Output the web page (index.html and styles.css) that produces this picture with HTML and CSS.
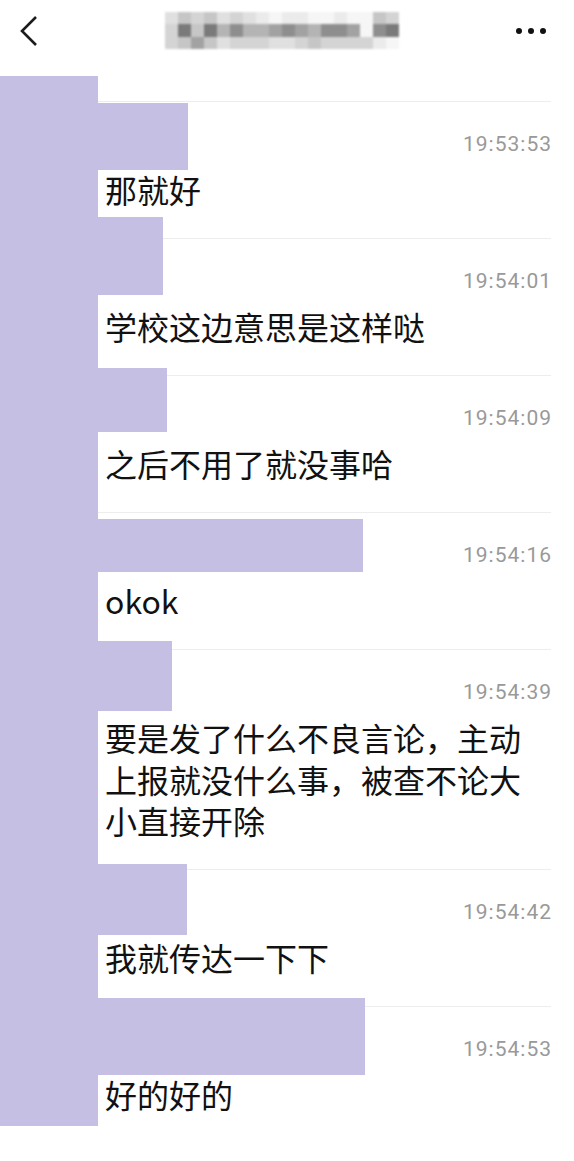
FILE: index.html
```html
<!DOCTYPE html>
<html lang="zh-CN">
<head>
<meta charset="utf-8">
<title>聊天记录</title>
<link rel="stylesheet" href="styles.css">
</head>
<body>
<header class="topbar">
  <div class="back">
    <svg width="24" height="34" viewBox="0 0 24 34"><polyline points="20,3 6,17 20,31" fill="none" stroke="#1c1c1c" stroke-width="2.6" stroke-linejoin="miter"/></svg>
  </div>
  <div class="mosaic">
    <i class="g2"></i><i class="g4"></i><i class="g3"></i><i class="g4"></i><i class="g2"></i><i class="g3"></i><i class="g2"></i><i class="g1"></i><i class="g0"></i><i class="g1"></i><i class="g1"></i><i class="g0"></i><i class="g0"></i><i class="g1"></i><i class="g0"></i><i class="g0"></i><i class="g4"></i><i class="g3"></i>
    <i class="g3"></i><i class="g8"></i><i class="g4"></i><i class="g8"></i><i class="g5"></i><i class="g7"></i><i class="g5"></i><i class="g5"></i><i class="g6"></i><i class="g7"></i><i class="g6"></i><i class="g5"></i><i class="g7"></i><i class="g7"></i><i class="g6"></i><i class="g0"></i><i class="g7"></i><i class="g8"></i>
    <i class="g3"></i><i class="g4"></i><i class="g6"></i><i class="g4"></i><i class="g2"></i><i class="g3"></i><i class="g3"></i><i class="g3"></i><i class="g2"></i><i class="g2"></i><i class="g3"></i><i class="g4"></i><i class="g3"></i><i class="g3"></i><i class="g3"></i><i class="g3"></i><i class="g1"></i><i class="g0"></i>
  </div>
  <div class="more"><span></span><span></span><span></span></div>
</header>

<main class="chat">
  <div class="row row-top"></div>
  <div class="row"><div class="time">19:53:53</div><div class="msg">那就好</div></div>
  <div class="row"><div class="time">19:54:01</div><div class="msg">学校这边意思是这样哒</div></div>
  <div class="row"><div class="time">19:54:09</div><div class="msg">之后不用了就没事哈</div></div>
  <div class="row"><div class="time">19:54:16</div><div class="msg">okok</div></div>
  <div class="row"><div class="time">19:54:39</div><div class="msg">要是发了什么不良言论，主动上报就没什么事，被查不论大小直接开除</div></div>
  <div class="row"><div class="time">19:54:42</div><div class="msg">我就传达一下下</div></div>
  <div class="row"><div class="time">19:54:53</div><div class="msg">好的好的</div></div>

  <div class="mask mask-col"></div>
  <div class="mask m1"></div>
  <div class="mask m2"></div>
  <div class="mask m3"></div>
  <div class="mask m4"></div>
  <div class="mask m5"></div>
  <div class="mask m6"></div>
  <div class="mask m7"></div>
</main>
</body>
</html>
```

FILE: styles.css
```css
html, body {
  margin: 0;
  padding: 0;
  background: #ffffff;
}

body {
  width: 574px;
  min-height: 1161px;
  font-family: "Noto Sans CJK SC", "Noto Sans", sans-serif;
  color: #111111;
}

.topbar {
  height: 76px;
  display: flex;
  align-items: flex-start;
}

.back {
  margin: 14px 0 0 16px;
  width: 24px;
  height: 34px;
}

.back svg {
  display: block;
}

.mosaic {
  margin: 12px 0 0 125px;
  display: grid;
  grid-template-columns: repeat(18, 13px);
  grid-template-rows: 12px 13px 12px;
  filter: blur(0.8px);
}

.mosaic i {
  display: block;
}

.g0 { background: #f6f6f6; }
.g1 { background: #ebebeb; }
.g2 { background: #e0e0e0; }
.g3 { background: #d4d4d4; }
.g4 { background: #c6c6c6; }
.g5 { background: #b4b4b4; }
.g6 { background: #a2a2a2; }
.g7 { background: #8e8e8e; }
.g8 { background: #7a7a7a; }

.more {
  margin: 28px 28px 0 auto;
  display: flex;
  gap: 6px;
}

.more span {
  width: 6px;
  height: 6px;
  border-radius: 50%;
  background: #111111;
}

.chat {
  position: relative;
}

.row {
  margin-left: 98px;
  width: 453px;
  box-sizing: border-box;
  border-top: 1px solid #ededed;
  padding: 28px 0 27.4px 7px;
}

.row-top {
  height: 25px;
  border-top: none;
  padding: 0;
}

.time {
  text-align: right;
  font-family: Roboto, "Liberation Sans", sans-serif;
  font-size: 21px;
  line-height: 28px;
  letter-spacing: 1px;
  margin-right: -1px;
  color: #999999;
}

.msg {
  margin-top: 11px;
  font-size: 32px;
  line-height: 41.6px;
  color: #111111;
}

.mask {
  position: absolute;
  background: #c6bfe4;
}

.mask-col { left: 0; top: 0; width: 98px; height: 1050px; }
.m1 { left: 98px; top: 27px;  width: 90px;  height: 67px; }
.m2 { left: 98px; top: 141px; width: 65px;  height: 78px; }
.m3 { left: 98px; top: 292px; width: 69px;  height: 64px; }
.m4 { left: 98px; top: 443px; width: 265px; height: 53px; }
.m5 { left: 98px; top: 565px; width: 74px;  height: 70px; }
.m6 { left: 98px; top: 788px; width: 89px;  height: 71px; }
.m7 { left: 98px; top: 922px; width: 267px; height: 77px; }
```
